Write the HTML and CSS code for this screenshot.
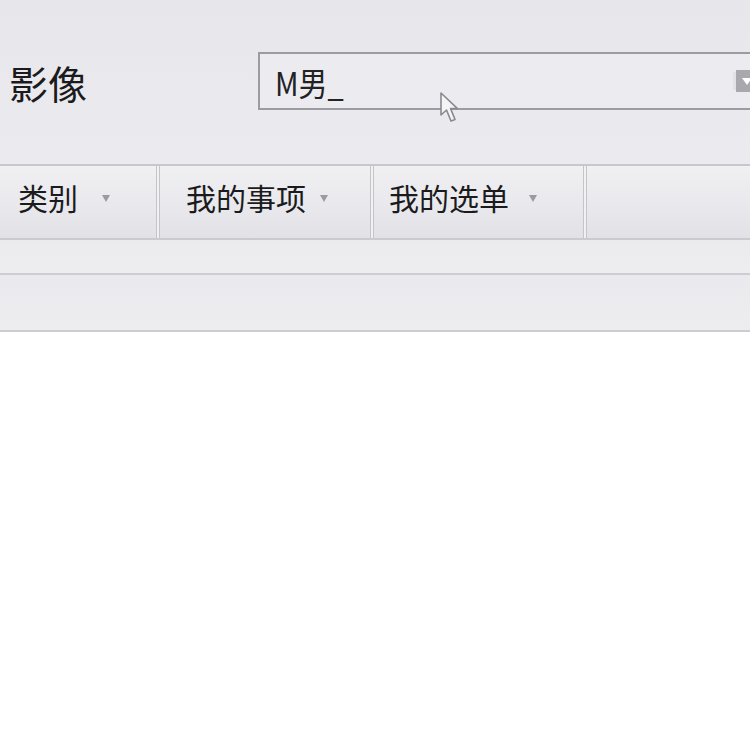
FILE: index.html
```html
<!DOCTYPE html>
<html lang="zh-CN">
<head>
<meta charset="utf-8">
<title>影像</title>
<link rel="stylesheet" href="styles.css">
</head>
<body>
<div class="window">
  <div class="header">
    <div class="label">影像</div>
    <div class="field">
      <span class="field-text">M男_</span>
      <span class="drop-btn"><svg width="14" height="10" viewBox="0 0 14 10"><path d="M2 2 L12 2 L7 9 Z" fill="#ffffff"/></svg></span>
    </div>
  </div>
  <div class="tabs">
    <div class="tab tab-first">类别<span class="caret"></span></div>
    <div class="tab tab-wide">我的事项<span class="caret caret-near"></span></div>
    <div class="tab tab-mid">我的选单<span class="caret caret-mid"></span></div>
    <div class="tab tab-last"></div>
  </div>
  <div class="band band-thin"></div>
  <div class="band band-thick"></div>
</div>
<svg class="cursor" width="22" height="34" viewBox="0 0 22 34">
  <path d="M2 2 L2 24 L7.5 19 L12 30 L16 28.4 L11.6 17.6 L18.5 17.6 Z" fill="#f4f4f6" stroke="#8a8a8e" stroke-width="1.6" stroke-linejoin="round"/>
</svg>
</body>
</html>
```

FILE: styles.css
```css
html, body {
  margin: 0;
  padding: 0;
  background: #ffffff;
}
body {
  width: 750px;
  height: 730px;
  overflow: hidden;
  position: relative;
  font-family: "Noto Sans CJK SC", "Noto Sans", sans-serif;
  color: #1b1b1d;
}
.window {
  width: 750px;
  overflow: hidden;
}
.header {
  height: 164px;
  background: linear-gradient(180deg, #e7e7eb 0%, #eaeaee 60%, #ebebef 100%);
  display: flex;
  align-items: flex-start;
  padding-top: 52px;
  box-sizing: border-box;
}
.label {
  width: 258px;
  padding-left: 9px;
  box-sizing: border-box;
  font-size: 39px;
  line-height: 60px;
  letter-spacing: 0;
}
.field {
  flex: 1;
  margin-right: -20px;
  height: 58px;
  border: 2px solid #9c9ca0;
  box-sizing: border-box;
  background: #ececf0;
  display: flex;
  align-items: center;
  padding-left: 15px;
}
.field-text {
  font-size: 29px;
  line-height: 40px;
  color: #222224;
  transform: scaleY(1.14);
  transform-origin: left center;
}
.drop-btn {
  margin-left: auto;
  margin-right: 10px;
  width: 22px;
  height: 22px;
  background: #a9a9ad;
  display: flex;
  align-items: center;
  justify-content: center;
  box-shadow: -5px 0 0 -2px #e2e2e6;
}
.tabs {
  display: flex;
  gap: 2px;
  height: 76px;
  border-top: 2px solid #c8c8cc;
  border-bottom: 2px solid #cbcbcf;
  background: #f1f1f4;
  box-sizing: border-box;
}
.tab {
  display: flex;
  align-items: center;
  font-size: 30px;
  padding-bottom: 11px;
  background: linear-gradient(180deg, #f0f0f3 0%, #e9e9ed 55%, #e2e2e6 100%);
  border-left: 1px solid #c5c5c9;
  border-right: 1px solid #c5c5c9;
  box-sizing: border-box;
}
.tab-first {
  width: 158px;
  margin-left: -1px;
  padding-left: 18px;
}
.tab-wide {
  width: 212px;
  padding-left: 26px;
}
.tab-mid {
  width: 211px;
  padding-left: 15px;
}
.tab-last {
  flex: 1;
  margin-right: -2px;
}
.caret {
  display: inline-block;
  width: 0;
  height: 0;
  border-left: 4px solid transparent;
  border-right: 4px solid transparent;
  border-top: 7px solid #9b9b9f;
  margin-left: 24px;
  margin-top: 4px;
}
.caret-near {
  margin-left: 14px;
}
.caret-mid {
  margin-left: 20px;
}
.band {
  box-sizing: border-box;
  background: #ececf0;
  border-bottom: 2px solid #cdcdd1;
}
.band-thin {
  height: 35px;
  background: linear-gradient(180deg, #ebebee 0%, #eeeef1 100%);
}
.band-thick {
  height: 57px;
  background: linear-gradient(180deg, #eaeaee 0%, #ededf0 100%);
}
.cursor {
  position: absolute;
  left: 439px;
  top: 91px;
}
```
